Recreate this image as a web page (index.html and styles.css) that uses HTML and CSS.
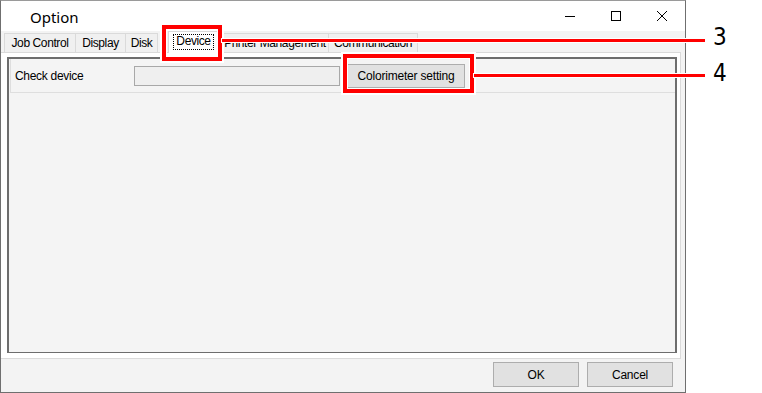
FILE: index.html
```html
<!DOCTYPE html>
<html lang="en">

<head>
    <meta charset="UTF-8">
    <title>Option</title>
    <link rel="stylesheet" href="styles.css">
</head>

<body>
    <div class="window">
        <div class="titlebar">
            <div class="title">Option</div>
            <div class="controls">
                <div class="ctl">
                    <svg width="10" height="10" viewBox="0 0 10 10"><path d="M0 5.5h10" stroke="#000" stroke-width="1"/></svg>
                </div>
                <div class="ctl">
                    <svg width="10" height="10" viewBox="0 0 10 10"><rect x="0.5" y="0.5" width="9" height="9" fill="none" stroke="#000" stroke-width="1"/></svg>
                </div>
                <div class="ctl">
                    <svg width="10" height="10" viewBox="0 0 10 10"><path d="M0 0L10 10M10 0L0 10" stroke="#000" stroke-width="1"/></svg>
                </div>
            </div>
        </div>
        <div class="main">
            <div class="tabs">
                <div class="tab w-job">Job Control</div>
                <div class="tab w-disp">Display</div>
                <div class="tab w-disk">Disk</div>
                <div class="tab active"><span class="focus">Device</span></div>
                <div class="tab w-print">Printer Management</div>
                <div class="tab w-comm">Communication</div>
            </div>
            <div class="page">
                <div class="frame">
                    <div class="row">
                        <span class="label">Check device</span>
                        <div class="textbox"></div>
                        <button class="btn wide">Colorimeter setting</button>
                    </div>
                </div>
            </div>
            <div class="footer">
                <button class="btn">OK</button>
                <button class="btn">Cancel</button>
            </div>
        </div>
    </div>

    <!-- callouts -->
    <div class="callout box3"></div>
    <div class="callout line3"></div>
    <div class="num n3">3</div>
    <div class="callout box4"></div>
    <div class="callout line4"></div>
    <div class="num n4">4</div>
</body>

</html>
```

FILE: styles.css
```css
body {
    margin: 0;
    padding: 0;
    background-color: #fff;
    font-family: 'Liberation Sans', Arial, sans-serif;
    font-size: 12px;
    letter-spacing: -0.3px;
    color: #000;
}

.window {
    width: 686px;
    height: 393px;
    box-sizing: border-box;
    border: 1px solid #6f6f6f;
    border-top-color: #9a9a9a;
    display: flex;
    flex-direction: column;
}

.titlebar {
    height: 30px;
    background-color: #fff;
    display: flex;
    align-items: center;
}

.title {
    padding-left: 29px;
    font-family: 'Noto Sans', 'Liberation Sans', sans-serif;
    font-size: 15px;
    letter-spacing: 0;
    flex: 1;
    padding-top: 1px;
}

.controls {
    display: flex;
    height: 30px;
}

.ctl {
    width: 46px;
    display: flex;
    align-items: center;
    justify-content: center;
}

.main {
    flex: 1;
    background-color: #f3f3f3;
    display: flex;
    flex-direction: column;
}

.tabs {
    height: 21px;
    display: flex;
    align-items: flex-end;
    padding-left: 3px;
}

.tab {
    height: 18px;
    line-height: 18px;
    box-sizing: content-box;
    border: 1px solid #dadada;
    border-bottom: none;
    border-left: none;
    text-align: center;
    white-space: nowrap;
    letter-spacing: -0.4px;
    background-color: #f0f0f0;
}

.w-job { width: 70px; border-left: 1px solid #dadada; }
.w-disp { width: 49px; }
.w-disk { width: 31px; margin-right: 10px; }
.w-print { width: 106px; margin-left: 3px; }
.w-comm { width: 88px; }

.tab.active {
    width: 49px;
    height: 21px;
    border-left: 1px solid #dadada;
    background-color: #fff;
    margin-bottom: -1px;
    position: relative;
    line-height: 18px;
}

.focus {
    display: inline-block;
    border: 1px dotted #000;
    line-height: 13px;
    padding: 0 2px 1px;
    margin-top: 1px;
}

.page {
    height: 307px;
    box-sizing: border-box;
    margin-right: 4px;
    background-color: #fff;
    border: 1px solid #dadada;
    border-left: none;
    padding: 4px 3px 5px 6px;
}

.frame {
    height: 100%;
    box-sizing: border-box;
    border: 2px solid #6d6d6d;
    border-bottom-width: 1px;
    background-color: #f4f4f4;
}

.row {
    height: 34px;
    border-left: 1px solid #dedede;
    border-bottom: 1px solid #dedede;
    margin-left: 1px;
    display: flex;
    align-items: center;
    padding-left: 4px;
    padding-top: 1px;
    box-sizing: border-box;
}

.label {
    width: 119px;
}

.textbox {
    width: 204px;
    height: 18px;
    border: 1px solid #a8a8a8;
    background-color: #efefef;
    margin-right: 7px;
}

.btn {
    width: 86px;
    height: 25px;
    background-color: #e1e1e1;
    border: 1px solid #adadad;
    font-family: 'Liberation Sans', Arial, sans-serif;
    font-size: 12px;
    letter-spacing: -0.2px;
    color: #000;
    padding: 0;
}

.btn.wide {
    width: 118px;
    height: 24px;
}

.footer {
    height: 33px;
    display: flex;
    justify-content: flex-end;
    gap: 8px;
    padding: 3px 12px 0 0;
    box-sizing: border-box;
}

/* red annotations over the screenshot */
.callout {
    position: absolute;
    background-color: #f00;
    box-shadow: 0 0 0 1px #fff;
}

.box3 {
    left: 162px;
    top: 25px;
    width: 52px;
    height: 28px;
    border: 4px solid #f00;
    background-color: transparent;
    box-shadow: 0 0 0 2px #fff, inset 0 0 0 1px #fff;
}

.line3 {
    left: 222px;
    top: 39px;
    width: 483px;
    height: 3px;
}

.box4 {
    left: 343px;
    top: 54px;
    width: 123px;
    height: 31px;
    border: 4px solid #f00;
    background-color: transparent;
    box-shadow: 0 0 0 2px #fff, inset 0 0 0 1px #fff;
}

.line4 {
    left: 474px;
    top: 74px;
    width: 231px;
    height: 3px;
}

.num {
    position: absolute;
    font-family: 'Liberation Sans Narrow', 'DejaVu Sans Condensed', 'Liberation Sans', sans-serif;
    font-size: 24px;
    line-height: 24px;
    letter-spacing: 0;
    color: #000;
}

.n3 {
    left: 713px;
    top: 25px;
}

.n4 {
    left: 713px;
    top: 61px;
}
```
